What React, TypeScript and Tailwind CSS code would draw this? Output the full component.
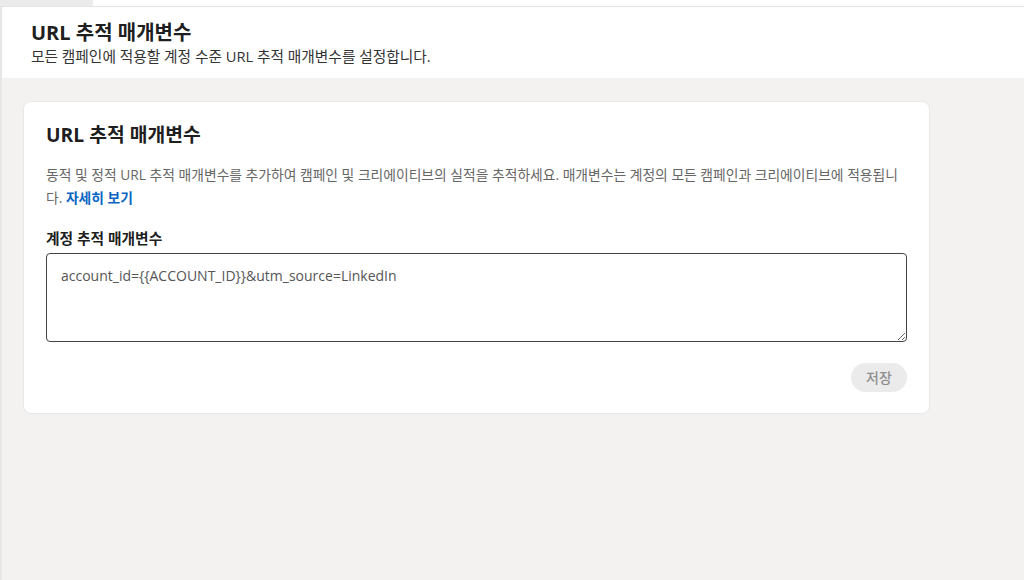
import React from "react";

const font = "font-['Segoe_UI','Open_Sans','Noto_Sans_CJK_KR',sans-serif]";

export default function App() {
  return (
    <div className={`flex h-[580px] w-[1024px] flex-col overflow-hidden bg-[#f3f2f0] ${font}`}>
      <div className="flex h-[7px] shrink-0 border-b border-[#e4e4e4]">
        <div className="w-[93px] bg-[#ebebeb]" />
        <div className="flex-1 bg-white" />
      </div>

      <div className="flex flex-1 flex-col border-l-2 border-[#e6e6e6]">
        <header className="flex h-[71px] shrink-0 flex-col bg-white pl-[29px] pt-[13px]">
          <h1 className="text-[20px] font-bold leading-[26px] text-black/90">URL 추적 매개변수</h1>
          <p className="text-[14.7px] leading-[20px] text-[#333]">
            모든 캠페인에 적용할 계정 수준 URL 추적 매개변수를 설정합니다.
          </p>
        </header>

        <main className="pl-[21px] pt-[23px]">
          <section className="flex w-[907px] flex-col rounded-lg border border-[#e8e8e8] bg-white px-[22px] pb-[21px] pt-[19px]">
            <h2 className="text-[19.3px] font-bold leading-[28px] text-black/90">URL 추적 매개변수</h2>
            <p className="mt-[14px] text-[13.8px] leading-[23px] text-[#666]">
              동적 및 정적 URL 추적 매개변수를 추가하여 캠페인 및 크리에이티브의 실적을 추적하세요. 매개변수는 계정의 모든
              캠페인과 크리에이티브에 적용됩니다.{" "}
              <a href="#" className="font-bold text-[#0a66c2]">
                자세히 보기
              </a>
            </p>

            <label className="mt-[19px] text-[14.75px] font-bold leading-[20px] text-black/90">계정 추적 매개변수</label>
            <textarea
              defaultValue="account_id={{ACCOUNT_ID}}&utm_source=LinkedIn"
              className="mt-[5px] h-[89px] w-full resize-y rounded-[4px] border border-[#444] px-[14px] py-[12px] text-[14px] leading-[20px] text-[#555] outline-none"
            />

            <div className="mt-[21px] flex justify-end">
              <button
                disabled
                className="h-[29px] w-[56px] rounded-full bg-[#ebebeb] text-[14px] font-medium text-[#8f8f8f]"
              >
                저장
              </button>
            </div>
          </section>
        </main>
      </div>
    </div>
  );
}
